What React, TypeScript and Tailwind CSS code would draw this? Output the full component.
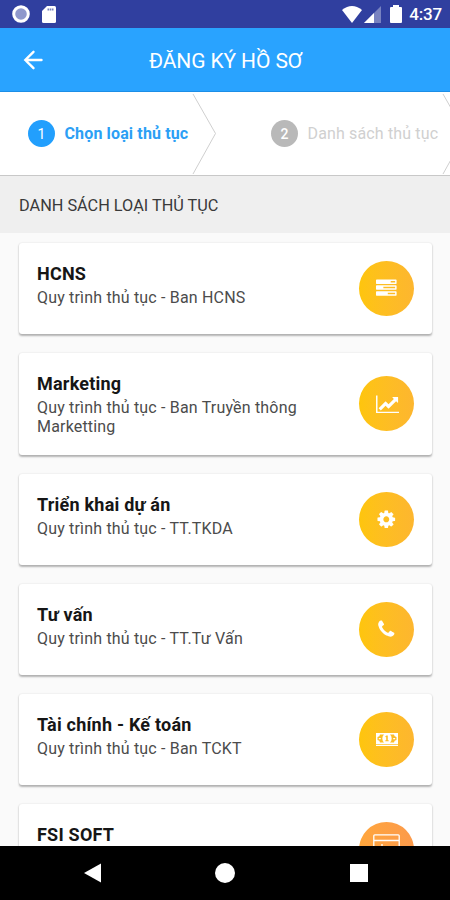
import React, { ReactNode } from 'react';

interface IconProps {
  className?: string;
}

const TasksIcon: React.FC<IconProps> = ({ className = '' }) => (
  <svg viewBox="0 0 1792 1792" fill="currentColor" className={className}>
    <path d="M1024 1408h640v-128h-640v128zm-384-512h1024v-128h-1024v128zm640-512h384v-128h-384v128zm512 832v256q0 26-19 45t-45 19h-1664q-26 0-45-19t-19-45v-256q0-26 19-45t45-19h1664q26 0 45 19t19 45zm0-512v256q0 26-19 45t-45 19h-1664q-26 0-45-19t-19-45v-256q0-26 19-45t45-19h1664q26 0 45 19t19 45zm0-512v256q0 26-19 45t-45 19h-1664q-26 0-45-19t-19-45v-256q0-26 19-45t45-19h1664q26 0 45 19t19 45z" />
  </svg>
);

const ChartIcon: React.FC<IconProps> = ({ className = '' }) => (
  <svg viewBox="0 0 2048 1792" fill="currentColor" className={className}>
    <path d="M2048 1536v128h-2048v-1536h128v1408h1920zm-128-1248v435q0 21-19.500 29.500t-35.500-7.500l-121-121-633 633q-10 10-23 10t-23-10l-233-233-416 416-192-192 585-585q10-10 23-10t23 10l233 233 464-464-121-121q-16-16-7.500-35.500t29.500-19.500h435q14 0 23 9t9 23z" />
  </svg>
);

const CogIcon: React.FC<IconProps> = ({ className = '' }) => (
  <svg viewBox="0 0 1792 1792" fill="currentColor" className={className}>
    <path d="M1152 896q0-106-75-181t-181-75-181 75-75 181 75 181 181 75 181-75 75-181zm512-109v222q0 12-8 23t-20 13l-185 28q-19 54-39 91 35 50 107 138 10 12 10 25t-9 23q-27 37-99 108t-94 71q-12 0-26-9l-138-108q-44 23-91 38-16 136-29 186-7 28-36 28h-222q-14 0-24.500-8.500t-11.500-21.500l-28-184q-49-16-90-37l-141 107q-10 9-25 9-14 0-25-11-126-114-165-168-7-10-7-23 0-12 8-23 15-21 51-66.500t54-70.500q-27-50-41-99l-183-27q-13-2-21-12.500t-8-23.500v-222q0-12 8-23t19-13l186-28q14-46 39-92-40-57-107-138-10-12-10-24 0-10 9-23 26-36 98.500-107.500t94.500-71.500q13 0 26 10l138 107q44-23 91-38 16-136 29-186 7-28 36-28h222q14 0 24.500 8.500t11.500 21.500l28 184q49 16 90 37l142-107q9-9 24-9 13 0 25 10 129 119 165 170 7 8 7 22 0 12-8 23-15 21-51 66.500t-54 70.500q26 50 41 98l183 28q13 2 21 12.500t8 23.500z" />
  </svg>
);

const PhoneIcon: React.FC<IconProps> = ({ className = '' }) => (
  <svg viewBox="0 0 1792 1792" fill="currentColor" className={className}>
    <path d="M1600 1240q0 27-10 70.500t-21 68.500q-21 50-122 106-94 51-186 51-27 0-53-3.500t-57.500-12.500-47-14.500-55.500-20.500-49-18q-98-35-175-83-127-79-264-216t-216-264q-48-77-83-175-3-9-18-49t-20.500-55.500-14.500-47-12.500-57.500-3.500-53q0-92 51-186 56-101 106-122 25-11 68.500-21t70.500-10q14 0 21 3 18 6 53 76 11 19 30 54t35 63.500 31 53.500q3 4 17.500 25t21.500 35.500 7 28.500q0 20-28.500 50t-62 55-62 53-28.500 46q0 9 5 22.500t8.500 20.500 14 24 11.500 19q76 137 174 235t235 174q2 1 19 11.500t24 14 20.500 8.500 22.500 5q18 0 46-28.500t53-62 55-62 50-28.500q14 0 28.500 7t35.500 21.500 25 17.500q25 15 53.500 31t63.500 35 54 30q70 35 76 53 3 7 3 21z" />
  </svg>
);

const MoneyIcon: React.FC<IconProps> = ({ className = '' }) => (
  <svg viewBox="0 0 22 13" fill="currentColor" className={className}>
    <path
      fillRule="evenodd"
      d="M0 0h22v11H0zM4 1.500Q4 3.700 1.500 3.900V7.100Q4 7.300 4 9.500H8Q6.300 8 6.300 5.500T8 1.500zM14 1.500Q15.700 3 15.700 5.500T14 9.500h4Q18 7.300 20.500 7.100V3.900Q18 3.700 18 1.500zM10.400 2.500L9.200 3.600l.6.6.4-.3V7.200H9.300v1h3.400v-1h-.9V2.500z"
    />
    <path d="M2.800 5h2v1.200h-2zM17.200 5h2v1.200h-2z" />
    <path d="M0 11.700h22V13H0z" />
  </svg>
);

const CardIcon: React.FC<IconProps> = ({ className = '' }) => (
  <svg viewBox="0 0 27 24" fill="none" stroke="currentColor" strokeWidth="1.3" className={className}>
    <rect x="0.8" y="0.8" width="25.4" height="20" rx="1" />
    <path d="M1 6.500h25" strokeWidth="1.500" />
    <path d="M9 10v2" />
  </svg>
);

interface StepProps {
  index: number;
  label: string;
  active?: boolean;
  className?: string;
}

const Step: React.FC<StepProps> = ({ index, label, active = false, className = '' }) => (
  <div className={`flex items-center shrink-0 ${className}`}>
    <span
      className={`flex size-[27px] shrink-0 items-center justify-center rounded-full text-sm text-white ${active ? 'bg-[#229ffd]' : 'bg-[#b9b9b9] font-medium'}`}
    >
      {index}
    </span>
    <span
      className={`ml-[9.5px] whitespace-nowrap text-[16px] ${active ? 'font-bold tracking-[0.14px] text-[#2c9ff5]' : 'tracking-[0.15px] text-[#d0d0d0]'}`}
    >
      {label}
    </span>
  </div>
);

const StepArrow: React.FC<IconProps> = ({ className = '' }) => (
  <svg viewBox="0 0 24 83" fill="none" stroke="#cfcfcf" className={`h-[83px] w-6 shrink-0 ${className}`}>
    <path d="M1 2L23.500 41.500L1 82" />
  </svg>
);

interface ProcedureCardProps {
  title: string;
  description?: string;
  icon: ReactNode;
  tall?: boolean;
  orange?: boolean;
}

const ProcedureCard: React.FC<ProcedureCardProps> = ({ title, description, icon, tall = false, orange = false }) => (
  <div
    className={`flex shrink-0 items-center justify-between rounded-[3px] bg-white px-[18px] shadow-[0_1.500px_2px_rgba(0,0,0,0.28),0_0_2px_rgba(0,0,0,0.08)] ${tall ? 'h-[102px]' : 'h-[91px]'}`}
  >
    <div className="w-[280px] self-stretch pt-[19px]">
      <h2 className="text-[18px] leading-6 font-bold tracking-[0.22px] text-[#161616]">{title}</h2>
      {description && (
        <p className="mt-[2px] text-[16px] leading-[19px] tracking-[0.18px] text-[#4c4c4c]">{description}</p>
      )}
    </div>
    <div
      className={`flex size-[55px] shrink-0 items-center justify-center rounded-full bg-linear-to-r text-white ${orange ? 'from-[#ffa63c] to-[#fc9a4b]' : 'from-[#fec50c] to-[#fdb62f]'}`}
    >
      {icon}
    </div>
  </div>
);

const procedures: ProcedureCardProps[] = [
  { title: 'HCNS', description: 'Quy trình thủ tục - Ban HCNS', icon: <TasksIcon className="mt-px size-[20.6px]" /> },
  {
    title: 'Marketing',
    description: 'Quy trình thủ tục - Ban Truyền thông Marketting',
    icon: <ChartIcon className="mt-px ml-0.5 h-[20.6px] w-[23.6px]" />,
    tall: true,
  },
  { title: 'Triển khai dự án', description: 'Quy trình thủ tục - TT.TKDA', icon: <CogIcon className="size-[20.6px]" /> },
  { title: 'Tư vấn', description: 'Quy trình thủ tục - TT.Tư Vấn', icon: <PhoneIcon className="size-[20.6px]" /> },
  {
    title: 'Tài chính - Kế toán',
    description: 'Quy trình thủ tục - Ban TCKT',
    icon: <MoneyIcon className="h-[13px] w-[22px]" />,
  },
  { title: 'FSI SOFT', icon: <CardIcon className="mb-[7px] h-6 w-[27px]" />, orange: true },
];

const StatusBar: React.FC = () => (
  <div className="flex h-7 shrink-0 items-center bg-[#303f9f] text-white">
    <svg viewBox="0 0 18 18" className="ml-3 size-[18px]">
      <circle cx="9" cy="9" r="7.300" fill="#8f98cc" stroke="white" strokeWidth="3" />
    </svg>
    <svg viewBox="0 0 14 17" className="ml-3 h-[17px] w-3.5" fill="currentColor">
      <path d="M5 0h7.500Q14 0 14 1.500v14Q14 17 12.500 17h-11Q0 17 0 15.500V5z" />
      <path d="M5.500 3.500h6" stroke="#7882bd" strokeWidth="2" strokeDasharray="1.600 0.600" />
    </svg>
    <svg viewBox="0 0 20 17" className="ml-auto h-[17px] w-5" fill="currentColor">
      <path d="M10 17L0 4Q10-4 20 4z" />
    </svg>
    <svg viewBox="0 0 17 17" className="ml-[2px] size-[17px]" fill="currentColor">
      <path d="M17 0v17H0z" opacity=".35" />
      <path d="M10 7v10H0z" />
    </svg>
    <svg viewBox="0 0 12 18" className="ml-[9px] h-[18px] w-3" fill="currentColor">
      <path d="M3 0h6v2h2q1 0 1 1v14q0 1-1 1H1q-1 0-1-1V3q0-1 1-1h2z" />
    </svg>
    <span className="mt-0.5 mr-2 ml-[7px] text-[17px] font-medium tracking-[-0.2px]">4:37</span>
  </div>
);

const NavBar: React.FC = () => (
  <div className="flex h-[54px] shrink-0 items-center bg-black pl-[83.5px]">
    <svg viewBox="0 0 18 20" className="h-5 w-[17.5px]" fill="white">
      <path d="M18 0v20L0 10z" />
    </svg>
    <span className="ml-[114px] size-5 rounded-full bg-white" />
    <span className="ml-[115px] size-[18px] bg-white" />
  </div>
);

const App: React.FC = () => (
  <div className="flex h-[900px] w-[450px] flex-col overflow-hidden bg-[#fafafa] font-[Roboto,sans-serif]">
    <StatusBar />

    <header className="flex h-16 shrink-0 items-center border-b border-[#1d8ee6] bg-[#29a3ff] text-white">
      <svg viewBox="0 0 20 20" className="ml-[23px] size-5" fill="none" stroke="currentColor" strokeWidth="2.400">
        <path d="M18.500 10H2.500M10.500 1.800L2.300 10L10.500 18.200" strokeLinecap="round" />
      </svg>
      <h1 className="mt-[5px] ml-[106px] whitespace-nowrap text-[21px] tracking-[-0.12px]">ĐĂNG KÝ HỒ SƠ</h1>
    </header>

    <div className="flex h-[83px] shrink-0 items-center overflow-hidden bg-white">
      <Step index={1} label="Chọn loại thủ tục" active className="ml-7 w-[164px]" />
      <StepArrow />
      <Step index={2} label="Danh sách thủ tục" className="ml-[55px] w-[171px]" />
      <StepArrow />
    </div>

    <div className="flex h-[58px] shrink-0 items-center border-t-[1.500px] border-[#c8c8c8] bg-[#efefef] pt-[3px] pl-[19px] text-[16.300px] text-[#3a3a3a]">
      DANH SÁCH LOẠI THỦ TỤC
    </div>

    <main className="flex min-h-0 flex-1 flex-col gap-[19px] overflow-hidden pt-[9.5px] pr-[18px] pl-[19px]">
      {procedures.map((item) => (
        <ProcedureCard key={item.title} {...item} />
      ))}
    </main>

    <NavBar />
  </div>
);

export default App;
